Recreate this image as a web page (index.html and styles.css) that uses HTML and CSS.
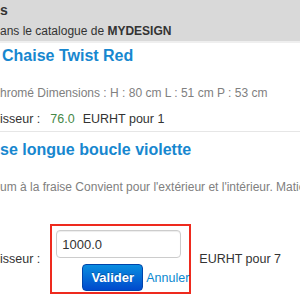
FILE: index.html
```
<!DOCTYPE html>
<html lang="fr">
<head>
    <meta charset="UTF-8">
    <meta name="viewport" content="width=device-width, initial-scale=1.0">
    <title>Catalogue</title>
    <link rel="stylesheet" href="styles.css">
</head>
<body>
    <header class="catalog-head">
        <div class="head-title">s</div>
        <div class="head-sub">ans le catalogue de <b>MYDESIGN</b></div>
    </header>
    <section class="product">
        <h2>Chaise Twist Red</h2>
        <p class="desc">hromé Dimensions : H : 80 cm L : 51 cm P : 53 cm</p>
        <div class="price-row">
            <span class="label">isseur :</span>
            <span class="value">76.0</span>
            <span class="unit">EURHT pour 1</span>
        </div>
    </section>
    <section class="product second">
        <h2>se longue boucle violette</h2>
        <p class="desc">um à la fraise Convient pour l'extérieur et l'intérieur. Matiè</p>
        <div class="price-row edit">
            <span class="label">isseur :</span>
            <form class="edit-box" onsubmit="return false">
                <input type="text" value="1000.0">
                <div class="actions">
                    <button type="submit" class="btn-primary">Valider</button>
                    <a href="#" class="cancel">Annuler</a>
                </div>
            </form>
            <span class="unit">EURHT pour 7</span>
        </div>
    </section>
</body>
</html>
```

FILE: styles.css
```
body {
    margin: 0;
    font-family: "Liberation Sans", Arial, sans-serif;
    font-size: 12px;
    color: #333;
    background: #fff;
    overflow: hidden;
    white-space: nowrap;
}
.catalog-head {
    background: #d9d9d9;
    border-bottom: 2px solid #efefef;
    height: 41px;
}
.head-title {
    font-size: 14px;
    font-weight: bold;
    line-height: 20px;
    margin-bottom: 1px;
}
.head-sub {
    font-size: 12px;
    line-height: 20px;
}
.product h2 {
    margin: 3px 0 0 2px;
    font-size: 16px;
    line-height: 20px;
    color: #1787cf;
}
.product .desc {
    margin: 17px 0 0 0;
    line-height: 20px;
    color: #808080;
    overflow: hidden;
}
.price-row {
    display: flex;
    align-items: center;
    margin-top: 6px;
    font-size: 12.5px;
    line-height: 20px;
}
.label {
    margin-right: 10px;
}
.value {
    color: #468847;
    margin-right: 8px;
}
.product.second {
    border-top: 1px solid #e6e6e6;
    margin-top: 2px;
}
.product.second h2 {
    margin: 8px 0 0 0;
}
.product.second .desc {
    margin-bottom: 27px;
}
.price-row.edit {
    margin-top: 0;
    height: 70px;
}
.edit-box {
    box-sizing: border-box;
    height: 70px;
    width: 141px;
    margin: 0 8px 0 0;
    border: 2px solid #ee2a1e;
    padding: 4px 0 0 4px;
}
.edit-box input {
    display: block;
    box-sizing: border-box;
    width: 125px;
    height: 28px;
    margin: 0;
    padding: 0 5px;
    border: 1px solid #ccc;
    border-radius: 4px;
    font-family: inherit;
    font-size: 13px;
    color: #333;
    box-shadow: inset 0 1px 1px rgba(0, 0, 0, 0.075);
}
.actions {
    display: flex;
    justify-content: flex-end;
    align-items: center;
    gap: 3px;
    margin-top: 6px;
}
.btn-primary {
    box-sizing: border-box;
    width: 61px;
    height: 27px;
    padding: 0;
    border: 1px solid #0044aa;
    border-radius: 4px;
    background: linear-gradient(#0a8ee0, #0049cc);
    color: #fff;
    font-family: inherit;
    font-size: 13px;
    font-weight: bold;
    text-shadow: 0 -1px 0 rgba(0, 0, 0, 0.25);
}
.cancel {
    color: #0a88d0;
    font-size: 12.5px;
    text-decoration: none;
}
```
